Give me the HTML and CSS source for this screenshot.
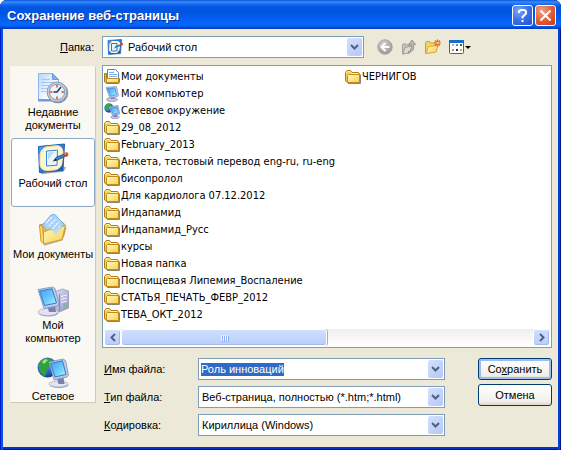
FILE: index.html
```html
<!DOCTYPE html>
<html lang="ru">
<head>
<meta charset="utf-8">
<title>Сохранение веб-страницы</title>
<link rel="stylesheet" href="styles.css">
</head>
<body>
<svg class="sprite" aria-hidden="true">
  <defs>
    <linearGradient id="gFolder" x1="0" y1="0" x2="1" y2="1"><stop offset="0" stop-color="#fffbc0"/><stop offset="1" stop-color="#f7cf50"/></linearGradient>
    <linearGradient id="gScreen" x1="0" y1="0" x2="1" y2="1"><stop offset="0" stop-color="#3f9bf4"/><stop offset=".6" stop-color="#6fd0fb"/><stop offset="1" stop-color="#b8f2ff"/></linearGradient>
    <linearGradient id="gCase" x1="0" y1="0" x2="1" y2="1"><stop offset="0" stop-color="#e4e5f6"/><stop offset="1" stop-color="#8c90c4"/></linearGradient>
    <linearGradient id="gPage" x1="0" y1="0" x2="1" y2="1"><stop offset="0" stop-color="#b9d5fb"/><stop offset=".7" stop-color="#ffffff"/></linearGradient>
    <linearGradient id="gDesk" x1="0" y1="0" x2="1" y2="1"><stop offset="0" stop-color="#4da3f6"/><stop offset="1" stop-color="#0b50b8"/></linearGradient>
    <radialGradient id="gGlobe" cx=".35" cy=".3" r=".8"><stop offset="0" stop-color="#5fa8fb"/><stop offset="1" stop-color="#0a3290"/></radialGradient>
    <radialGradient id="gGrey" cx=".4" cy=".3" r=".8"><stop offset="0" stop-color="#d2d1c9"/><stop offset="1" stop-color="#93928a"/></radialGradient>
  </defs>
  <symbol id="folder" viewBox="0 0 16 16">
    <path d="M3 14.500h12.500v-9" fill="none" stroke="#8a8472"/>
    <path d="M.5 3.500 2 1.500h3.500l1.500 2h6.500l1 1v9h-12l-2-1.500z" fill="#f3cb55" stroke="#b07c14"/>
    <path d="M2.500 13.500V6.500l1-1h11v8z" fill="url(#gFolder)" stroke="#c08c1c"/>
    <path d="M1.500 4 2.500 2.500H5l1.500 2H13" fill="none" stroke="#fff3a8"/>
  </symbol>
  <symbol id="docs16" viewBox="0 0 16 16">
    <path d="M.5 4.500h2v7H14l1.500-2v4l-1 1h-12l-2-1.500z" fill="#eab93a" stroke="#a87c18"/>
    <path d="M3.500.5h8l3 3v7h-11z" fill="#fff" stroke="#5a83b8"/>
    <path d="M5 3.500h5M5 5.500h8M5 7.500h8" stroke="#79aeea"/>
    <path d="M2.500 9.500h12v4h-12z" fill="url(#gFolder)" stroke="#c08c1c"/>
  </symbol>
  <symbol id="pc16" viewBox="0 0 16 16">
    <ellipse cx="8" cy="13.500" rx="5.500" ry="2" fill="#c6c9e2" stroke="#7b80ad" stroke-width=".6"/>
    <path d="M7 10h3.500v3H7z" fill="#7d82b4"/>
    <path d="M2 1.500 12.500.5l2 9.500-8.500 2z" fill="#d3d7ee" stroke="#8088bb" stroke-width=".7"/>
    <path d="M3.300 2.500 11 1.800l1.600 7-6 1.400z" fill="url(#gScreen)" stroke="#2675d0" stroke-width=".6"/>
  </symbol>
  <symbol id="net16" viewBox="0 0 16 16">
    <circle cx="5" cy="5" r="4.700" fill="url(#gGlobe)"/>
    <path d="M1 2.500 4 .5l3 1-1 3-2 1v3L1.500 7z" fill="#38a838"/>
    <ellipse cx="11" cy="14" rx="4.300" ry="1.600" fill="#c6c9e2" stroke="#7b80ad" stroke-width=".6"/>
    <path d="M9.500 11H13v3H9.500z" fill="#7d82b4"/>
    <path d="M5 4 14 2.500 15.800 11l-7.300 1.500z" fill="#d3d7ee" stroke="#8088bb" stroke-width=".7"/>
    <path d="m6.300 5 6.700-1.200L14.400 10 9.300 11.200z" fill="url(#gScreen)" stroke="#2675d0" stroke-width=".6"/>
  </symbol>
  <symbol id="desk16" viewBox="0 0 16 16">
    <path d="M1 1.500 14.500.5 13.500 14.500l-12 1z" fill="url(#gDesk)" stroke="#2467ba" stroke-width=".8"/>
    <path d="M2.500 5 5 2h6l2.500 2-1 7-2.500 3H4.500L2 11.500z" fill="#fdf6d8"/>
    <path d="M4.500 4.500H10v7.500H4.500z" fill="#e4f3ff" stroke="#2d7ad6"/>
    <path d="m7 9.500 1.500-2.500L14 5l1 1.500-5.500 2z" fill="#3b74c4"/>
    <circle cx="14.500" cy="5" r="1.500" fill="#d4442b"/>
  </symbol>
  <symbol id="desk" viewBox="0 0 32 32">
    <path d="M4 30.500 26 28l2.500-4" fill="none" stroke="#a9a9a6" stroke-width="1.500"/>
    <path d="m1.500 3.500 26-2.500-1.500 26.500-23.500 2z" fill="url(#gDesk)" stroke="#1d5fb6"/>
    <path d="M3 11c1-4 4-7 8-7.500l9-.8c4 0 6 3 6 7l-1 10c0 4-4 7-7.500 7.300l-7 .7c-4.500 0-7.500-2.700-7.500-6.700z" fill="#fcf5d2" stroke="#eddc98"/>
    <path d="m9.500 8 11-.8-.5 15-10.500.8z" fill="#eaf6ff" stroke="#3484dc"/>
    <path d="m11 9.500 6-.5-6 8z" fill="#b9dcfb"/>
    <path d="m17.500 17 2-3 8-3 1.500 2-8.500 4z" fill="#3f80cf" stroke="#1d4688" stroke-width=".8"/>
    <path d="m15.500 18.500 3-3 1.500 2z" fill="#222"/>
    <circle cx="29" cy="11.500" r="2.300" fill="#d4442b"/><circle cx="28.500" cy="10.700" r=".8" fill="#ffb19b"/>
  </symbol>
  <symbol id="recent" viewBox="0 0 32 32">
    <path d="M1.500 1.500h14l6 6v21h-20z" fill="url(#gPage)" stroke="#8eb4e8"/>
    <path d="M15.500 1.500v6h6z" fill="#7fb0f0" stroke="#6598dc"/>
    <path d="M4 7.500h9M4 10.500h13M4 13.500h8M4 16.500h6M4 19.500h5" stroke="#a4c7f4"/>
    <path d="M1 27h18v2.500H1z" fill="#6b9de0"/>
    <circle cx="20.800" cy="20.800" r="10.500" fill="#8793a4"/>
    <circle cx="20" cy="20" r="10" fill="#c3ccd8" stroke="#8f9cad"/>
    <circle cx="20" cy="20" r="7.700" fill="#e9f4ff" stroke="#8c9bb0"/>
    <path d="M20 13v2.500M20 24.500v2.500M13 20h2.500M24.500 20h2.500" stroke="#ee7150" stroke-width="2"/>
    <path d="m24 15-4 5h-3.500" fill="none" stroke="#253b58" stroke-width="1.600"/>
  </symbol>
  <symbol id="docs" viewBox="0 0 32 32">
    <path d="m7 31 18-5 4-13" fill="none" stroke="#b5b0a3" stroke-width="1.500"/>
    <path d="m2.500 11 5.500-1.500 3 2 13-4 3 2v12l-20 8z" fill="#e9bb40" stroke="#c09228"/>
    <path d="M5.500 11 14 1l4-.5 9 10-11 13z" fill="#a9d2fa" stroke="#78aee8"/>
    <path d="m9 9 6-6m-3 9 7-7m-4 10 7-7m-4 10 5-6" stroke="#eef8ff" stroke-width="1.600" stroke-dasharray="2 1"/>
    <path d="m2.500 11 3 2 1.500 16.500-3-2z" fill="#f8dc76" stroke="#cf9e2b"/>
    <path d="m6.500 18 8-3 2 1.500L28.500 11 25 25.500 6.500 30z" fill="url(#gFolder)" stroke="#cf9e2b"/>
    <path d="m14 16 12-4-7 9z" fill="#b6dcfa" opacity=".8"/>
  </symbol>
  <symbol id="pc" viewBox="0 0 32 32">
    <path d="m17.500 7 8-3 6 2v17l-9 4-5-2z" fill="url(#gCase)" stroke="#9498c4" stroke-width=".8"/>
    <path d="M22.500 9v17" stroke="#8086b5"/><path d="m24 11.500 6-1.500m-6 4.500 6-1.500m-6 4.500 6-1.500" stroke="#f4f4ff" stroke-width="1.200"/><circle cx="27.500" cy="20" r="1.200" fill="#6acb50"/>
    <ellipse cx="11.500" cy="28" rx="10" ry="3.500" fill="#9da2c6"/><ellipse cx="11" cy="27" rx="10" ry="3.500" fill="#e2e4f1" stroke="#9ea3c7" stroke-width=".6"/>
    <path d="M10 20h8l1 7h-7z" fill="#7c82ad"/>
    <path d="M1 4.500 15.500 2l2.500 1.500L22 19l-1.500 2L7 23.500z" fill="#c5c9e2" stroke="#858bb5" stroke-width=".8"/>
    <path d="m2.500 6 12.500-2.300L19.500 18 7.500 20.500z" fill="url(#gScreen)" stroke="#2a7fd4"/>
  </symbol>
  <symbol id="net" viewBox="0 0 32 32">
    <circle cx="10.500" cy="11.500" r="10" fill="url(#gGlobe)"/>
    <path d="m1.500 8.500 4-5 5-1.500 5 2-3 4 1 3-4 2v4l-2 3.500-5-5z" fill="#2fa339"/><path d="m5 6 3-3 3 1-4 4z" fill="#a1e57d"/>
    <ellipse cx="22" cy="29" rx="9.500" ry="3" fill="#9da2c6"/><ellipse cx="21.500" cy="28" rx="9.500" ry="3" fill="#e2e4f1" stroke="#9ea3c7" stroke-width=".6"/>
    <path d="M19.500 21h7l1 7h-6z" fill="#7c82ad"/>
    <path d="M12 6 26 3l2.500 1.500L31.500 19 30 21l-13 3z" fill="#c5c9e2" stroke="#858bb5" stroke-width=".8"/>
    <path d="m13.500 7.500 12-2.700L29 18.500 18 21z" fill="url(#gScreen)" stroke="#2a7fd4"/>
  </symbol>
  <symbol id="back" viewBox="0 0 16 16">
    <circle cx="8" cy="8" r="7.300" fill="url(#gGrey)" stroke="#a3a29a" stroke-width=".8"/>
    <path d="M8.500 4 4.500 8l4 4M5 8h7.500" fill="none" stroke="#fff" stroke-width="2"/>
  </symbol>
  <symbol id="up" viewBox="0 0 16 16">
    <path d="M1.500 5.500 4 4.500l1.500 1 3-.5v9l-7 1z" fill="#c4c3bb" stroke="#a5a49c"/>
    <path d="m2 15 2-6.500 7-1.500-2 6.500z" fill="#dddcd4" stroke="#a5a49c"/>
    <path d="M7 13c4-1 3.500-4 3-7H7.500L11 1l3.500 4.500-2 .3c.5 4 .5 7-5.500 7.200z" fill="#b8b7af" stroke="#8d8c84" stroke-width=".8"/>
  </symbol>
  <symbol id="newfolder" viewBox="0 0 16 16">
    <path d="M.5 3.500 1.500 2.500h3l1 1.500h6v8.500l-11 2z" fill="#f6d360" stroke="#cf9e2b"/>
    <path d="m1 14.500 2.500-7 9.500-1-2 6.500z" fill="url(#gFolder)" stroke="#d9ab3c"/>
    <path d="M12.500.5v7M9 4h7M10 1.500l5 5M15 1.500l-5 5" stroke="#ef5b25" stroke-width="1.200"/><circle cx="12.500" cy="4" r="1.300" fill="#ffd75c"/>
  </symbol>
  <symbol id="view" viewBox="0 0 16 16">
    <rect x=".5" y="1.500" width="14" height="13" rx="1" fill="#fff" stroke="#166ad1"/><path d="M0 1h15v3H0z" fill="#166ad1"/>
    <path d="M3 5h2v2H3z" fill="#b3a9c8"/><path d="M7 5h2v2H7z" fill="#8187a5"/><path d="M11 5h2v2h-2z" fill="#17851c"/><path d="M3 10h2v2H3z" fill="#f17949"/><path d="M7 10h2v2H7z" fill="#0e399f"/><path d="M11 10h2v2h-2z" fill="#e7a324"/>
  </symbol>
</svg>

<main class="window">
  <header class="titlebar">
    <h1>Сохранение веб-страницы</h1>
    <button class="caption" type="button" aria-label="Справка"><svg viewBox="0 0 19 19"><path d="M6 7V5.500L7.500 4h4L13 5.500v2L9.500 11v1.500M9.500 14v2" fill="none" stroke="#fff" stroke-width="2"/></svg></button>
    <button class="caption close" type="button" aria-label="Закрыть"><svg viewBox="0 0 19 19"><path d="m4.500 4.500 10 10m0-10-10 10" stroke="#fff" stroke-width="2"/></svg></button>
  </header>

  <div class="toolbar">
    <label for="place"><u>П</u>апка:</label>
    <div class="combo place">
      <svg class="i16"><use href="#desk16"/></svg>
      <select id="place"><option>Рабочий стол</option></select>
      <span class="drop"><svg viewBox="0 0 9 6"><path d="m1 1 3.500 3.500L8 1" /></svg></span>
    </div>
    <div class="tools">
      <button type="button" aria-label="Назад"><svg class="i16"><use href="#back"/></svg></button>
      <button type="button" aria-label="На один уровень вверх"><svg class="i16"><use href="#up"/></svg></button>
      <button type="button" aria-label="Новая папка"><svg class="i16"><use href="#newfolder"/></svg></button>
      <button type="button" aria-label="Вид"><svg class="i16"><use href="#view"/></svg><i class="tri"></i></button>
    </div>
  </div>

  <div class="content">
    <nav class="places">
      <button type="button"><svg class="i32"><use href="#recent"/></svg><span>Недавние<br>документы</span></button>
      <button type="button" class="current"><svg class="i32"><use href="#desk"/></svg><span>Рабочий стол</span></button>
      <button type="button"><svg class="i32"><use href="#docs"/></svg><span>Мои документы</span></button>
      <button type="button"><svg class="i32"><use href="#pc"/></svg><span>Мой<br>компьютер</span></button>
      <button type="button"><svg class="i32"><use href="#net"/></svg><span>Сетевое</span></button>
    </nav>

    <div class="main">
      <section class="browser">
        <ul class="files">
          <li><svg class="i16"><use href="#docs16"/></svg>Мои документы</li>
          <li><svg class="i16"><use href="#pc16"/></svg>Мой компьютер</li>
          <li><svg class="i16"><use href="#net16"/></svg>Сетевое окружение</li>
          <li><svg class="i16"><use href="#folder"/></svg>29_08_2012</li>
          <li><svg class="i16"><use href="#folder"/></svg>February_2013</li>
          <li><svg class="i16"><use href="#folder"/></svg>Анкета, тестовый перевод eng-ru, ru-eng</li>
          <li><svg class="i16"><use href="#folder"/></svg>бисопролол</li>
          <li><svg class="i16"><use href="#folder"/></svg>Для кардиолога 07.12.2012</li>
          <li><svg class="i16"><use href="#folder"/></svg>Индапамид</li>
          <li><svg class="i16"><use href="#folder"/></svg>Индапамид_Русс</li>
          <li><svg class="i16"><use href="#folder"/></svg>курсы</li>
          <li><svg class="i16"><use href="#folder"/></svg>Новая папка</li>
          <li><svg class="i16"><use href="#folder"/></svg>Поспищевая Липемия_Воспаление</li>
          <li><svg class="i16"><use href="#folder"/></svg>СТАТЬЯ_ПЕЧАТЬ_ФЕВР_2012</li>
          <li><svg class="i16"><use href="#folder"/></svg>ТЕВА_ОКТ_2012</li>
          <li><svg class="i16"><use href="#folder"/></svg>ЧЕРНИГОВ</li>
        </ul>
        <div class="scrollbar">
          <button type="button" aria-label="Прокрутить влево"><svg viewBox="0 0 6 9"><path d="M5 1 1.500 4.500 5 8"/></svg></button>
          <div class="track"><div class="thumb"><i></i><i></i><i></i><i></i></div></div>
          <button type="button" aria-label="Прокрутить вправо"><svg viewBox="0 0 6 9"><path d="m1 1 3.500 3.500L1 8"/></svg></button>
        </div>
      </section>

      <form class="form">
        <div class="fields">
          <label for="name"><u>И</u>мя файла:</label>
          <div class="combo"><input id="name" type="text" value="Роль инноваций"><span class="drop"><svg viewBox="0 0 9 6"><path d="m1 1 3.500 3.500L8 1"/></svg></span></div>
          <label for="type"><u>Т</u>ип файла:</label>
          <div class="combo"><select id="type"><option>Веб-страница, полностью (*.htm;*.html)</option></select><span class="drop"><svg viewBox="0 0 9 6"><path d="m1 1 3.500 3.500L8 1"/></svg></span></div>
          <label for="enc"><u>К</u>одировка:</label>
          <div class="combo"><select id="enc"><option>Кириллица (Windows)</option></select><span class="drop"><svg viewBox="0 0 9 6"><path d="m1 1 3.500 3.500L8 1"/></svg></span></div>
        </div>
        <div class="actions">
          <button type="button" class="default">Со<u>х</u>ранить</button>
          <button type="button">Отмена</button>
        </div>
      </form>
    </div>
  </div>
</main>
<script src="script.js"></script>
</body>
</html>
```
FILE: styles.css
```css
* { box-sizing: border-box; }

body {
  margin: 0;
  background: #fff;
  color: #000;
  font: 11px/13px "Liberation Sans", sans-serif;
}

button, input, select {
  margin: 0;
  padding: 0;
  border: 0;
  background: none;
  color: inherit;
  font: inherit;
}

button { cursor: default; }
svg { display: block; flex: none; }
.sprite { position: absolute; width: 0; height: 0; }
.i16 { width: 16px; height: 16px; }
.i32 { width: 32px; height: 32px; }

.window {
  min-height: 100vh;
  padding: 0 4px 4px;
  border-radius: 7px 7px 0 0;
  background: #ece9d8;
  box-shadow: inset 1px 0 #0019cf, inset 3px 0 #0855dd, inset -1px 0 #00138c, inset -3px 0 #0442d0, inset 0 -1px #00138c, inset 0 -3px #0734c4;
}

.titlebar {
  display: flex;
  align-items: center;
  gap: 2px;
  height: 29px;
  margin: 0 -4px;
  padding: 2px 5px 0 7px;
  border-radius: 7px 7px 0 0;
  background: linear-gradient(#0a55d8 0, #3c8cfa 2px, #1470f4 4px, #0555e0 7px, #0054e3 13px, #0460f6 20px, #0667fc 24px, #0460f4 26px, #0143cf 28px, #0138b8 29px);
}

h1 {
  flex: 1;
  margin: 0;
  color: #fff;
  font: bold 13px/16px "Liberation Sans", sans-serif;
  text-shadow: 1px 1px #0a2f8c;
}

.caption {
  width: 21px;
  height: 21px;
  border: 1px solid #fff;
  border-radius: 3px;
  background: radial-gradient(circle at 30% 25%, #7ea6f6, #3a6fe8 50%, #2250d0);
}
.caption svg { width: 19px; height: 19px; }
.close { background: radial-gradient(circle at 30% 25%, #f0a088, #e2603c 50%, #c43a14); }

.toolbar {
  display: flex;
  align-items: center;
  padding: 7px 6px 7px 56px;
}
.toolbar label { width: 42px; }

.combo {
  display: flex;
  align-items: center;
  height: 22px;
  padding: 1px;
  border: 1px solid #7f9db9;
  background: #fff;
}
.place { flex: 0 1 262px; padding-left: 4px; }
.combo input, .combo select {
  flex: 1;
  min-width: 0;
  padding-left: 2px;
  outline: 0;
  appearance: none;
}
.combo input { padding-left: 1px; }
.combo.place select { padding-left: 5px; }
.combo input::selection { background: #316ac5; color: #fff; }

.drop {
  display: grid;
  place-items: center;
  width: 15px;
  height: 18px;
  border-radius: 2px;
  background: linear-gradient(135deg, #d5e0fd, #b4c8f6);
  pointer-events: none;
}
.drop svg { width: 9px; height: 6px; }
.drop path, .scrollbar path { fill: none; stroke: #4d6185; stroke-width: 2; }

.tools { display: flex; gap: 8px; margin-left: 13px; }
.tools button { display: flex; align-items: center; }
.tri { border: 3px solid transparent; border-top-color: #000; border-bottom: 0; }

.content {
  display: grid;
  grid-template-columns: 86px minmax(0, 1fr);
  gap: 6px;
  padding: 0 5px 10px 6px;
}

.places {
  align-self: start;
  height: 337px;
  margin-top: 1px;
  overflow: hidden;
  border: 1px solid;
  border-color: #f8f7f0 #cdcab9 #cdcab9 #f8f7f0;
  background: #f9f8f3;
}
.places button {
  display: flex;
  flex-direction: column;
  align-items: center;
  gap: 2px;
  width: 100%;
  height: 69px;
  margin-bottom: 2px;
  padding-top: 4px;
  border: 1px solid transparent;
  border-radius: 3px;
}
.places span { margin: 0 -2px; }
.places .current { border-color: #8ba9c4; background: #fff; }

.browser {
  border: 1px solid #7f9db9;
  background: #fff;
  padding: 1px;
}

.files {
  display: grid;
  grid-template-rows: repeat(15, 17px);
  grid-auto-columns: 241px;
  grid-auto-flow: column;
  height: 262px;
  margin: 0;
  padding: 1px 0 0;
  overflow: hidden;
  list-style: none;
  font-family: "DejaVu Sans Condensed", "DejaVu Sans", sans-serif;
}
.files li { display: flex; align-items: center; gap: 1px; white-space: nowrap; }

.scrollbar {
  display: flex;
  height: 17px;
  background: linear-gradient(#f0eeea, #fff);
}
.scrollbar button, .thumb {
  display: flex;
  align-items: center;
  justify-content: center;
  border: 1px solid #fff;
  border-radius: 3px;
  background: linear-gradient(#d0dffd, #bacdfb);
  box-shadow: inset -1px -1px #a3b9ea;
}
.scrollbar button { width: 17px; }
.scrollbar button svg { width: 6px; height: 9px; }
.track { flex: 1; display: flex; }
.thumb { width: 50%; gap: 1px; box-shadow: 1px 0 #98b0dd, inset 0 -1px #a3b9ea; }
.thumb i { width: 1px; height: 6px; background: #f0f5ff; box-shadow: 1px 1px #8cb0f8; }

.form { display: flex; justify-content: space-between; margin-top: 10px; }
.fields {
  display: grid;
  grid-template-columns: 96px 247px;
  row-gap: 6px;
  align-items: center;
}
.fields label { padding-left: 2px; }

.actions { display: grid; gap: 4px; align-content: start; }
.actions button {
  width: 74px;
  height: 22px;
  border: 1px solid #003c74;
  border-radius: 3px;
  background: linear-gradient(#fff, #f2f1ec 80%, #dcd8cc);
}
.actions .default { box-shadow: inset 0 0 0 2px #9dbcf0; }
```
FILE: script.js
```js
const fileName = document.getElementById("name");
fileName.focus();
fileName.select();
```
